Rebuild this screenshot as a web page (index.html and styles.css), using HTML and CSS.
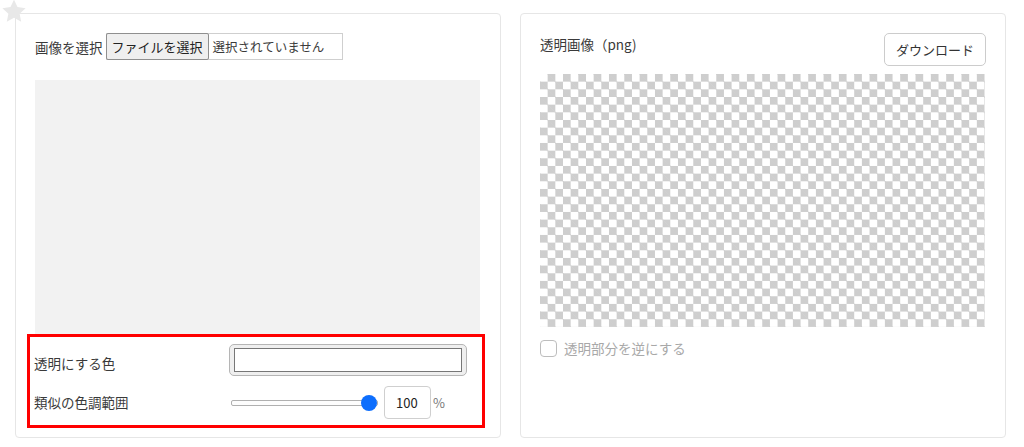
FILE: index.html
```html
<!DOCTYPE html>
<html lang="ja">
<head>
<meta charset="utf-8">
<link rel="stylesheet" href="styles.css">
</head>
<body>
<svg class="star" width="28" height="27" viewBox="0 0 24 24"><path d="M12 1.5l3.1 6.6 7.2.9-5.3 5 1.4 7.1L12 17.6l-6.4 3.5 1.4-7.1-5.3-5 7.2-.9z" fill="#e8e8e8"/></svg>
<main class="wrap">
  <section class="card left">
    <div class="file-row">
      <span class="lbl">画像を選択</span>
      <div class="file-box">
        <span class="file-btn">ファイルを選択</span>
        <span class="file-name">選択されていません</span>
      </div>
    </div>
    <div class="preview"></div>
    <div class="settings">
      <div class="set-row">
        <span class="set-lbl">透明にする色</span>
        <div class="color-input"><div class="swatch"></div></div>
      </div>
      <div class="set-row">
        <span class="set-lbl">類似の色調範囲</span>
        <div class="range">
          <div class="track"></div>
          <div class="thumb"></div>
        </div>
        <div class="num">100</div>
        <span class="pct">%</span>
      </div>
    </div>
  </section>
  <section class="card right">
    <div class="head">
      <span class="title">透明画像（png)</span>
      <button class="dl">ダウンロード</button>
    </div>
    <div class="checker"></div>
    <label class="check-row"><span class="box"></span><span class="check-lbl">透明部分を逆にする</span></label>
  </section>
</main>
</body>
</html>
```
FILE: styles.css
```css
* { box-sizing: border-box; }
html, body { margin: 0; background: #fff; }
body {
  font-family: "Noto Sans CJK JP", "Noto Sans", sans-serif;
  font-size: 13.5px;
  color: #3a3a3a;
  position: relative;
  width: 1024px;
  height: 447px;
  overflow: hidden;
}
.star { position: absolute; left: 0; top: -2px; }
.wrap {
  display: flex;
  gap: 19px;
  padding: 13px 0 0 15px;
}
.card {
  width: 486px;
  height: 425px;
  border: 1px solid #e6e6e6;
  border-radius: 4px;
  padding: 19px 19px 0 19px;
}
.file-row { display: flex; align-items: center; height: 27px; }
.lbl { margin-right: 3px; }
.file-box {
  display: flex; align-items: center;
  width: 237px; height: 27px;
  border: 1px solid #cfcfcf;
}
.file-btn {
  height: 27px; margin: -1px 0 0 -1px;
  padding: 0 5px;
  display: flex; align-items: center;
  background: #efefef;
  border: 1px solid #8f8f8f;
  border-radius: 2px;
  font-size: 13px;
  color: #222;
}
.file-name { margin-left: 4px; font-size: 12.5px; }
.preview {
  margin-top: 20px;
  width: 445px; height: 254px;
  background: #f2f2f2;
}
.settings {
  margin: 0 -4px 0 -8px;
  height: 94px;
  border: 3px solid #ff0000;
  padding: 7px 0 0 4px;
  display: flex; flex-direction: column;
}
.set-row { display: flex; align-items: center; }
.set-row:first-child { height: 36px; align-items: flex-start; }
.set-row:first-child .set-lbl { margin-top: 9px; }
.set-row:last-child { height: 38px; margin-top: 3px; }
.set-lbl { width: 195px; }
.color-input {
  width: 238px; height: 32px;
  background: #efefef;
  border: 1px solid #b5b5b5;
  border-radius: 5px;
  padding: 3px 4px;
}
.swatch { width: 100%; height: 100%; background: #fff; border: 1px solid #777; }
.range { position: relative; width: 147px; height: 20px; margin-left: 2px; }
.track {
  position: absolute; left: 0; right: 0; top: 8px; height: 6px;
  background: #fdfdfd; border: 1px solid #b0b0b0; border-radius: 2px;
}
.thumb {
  position: absolute; right: 1px; top: 3px;
  width: 16px; height: 16px; border-radius: 50%; background: #0d6efd;
}
.num {
  margin-left: 6px;
  width: 47px; height: 33px;
  border: 1px solid #cfcfcf; border-radius: 4px;
  display: flex; align-items: center; padding-left: 11px;
  font-size: 13px; color: #222;
}
.pct { margin-left: 2px; color: #777; font-size: 13px; }
.head { display: flex; justify-content: space-between; align-items: flex-start; height: 41px; }
.title { margin-top: 1px; }
.dl {
  width: 102px; height: 33px;
  background: #fff; border: 1px solid #cccccc; border-radius: 5px;
  font-family: inherit; font-size: 13px; color: #333; padding: 0;
}
.checker {
  width: 445px; height: 253px;
  background-color: #fff;
  background-image:
    linear-gradient(45deg, #cecece 25%, transparent 25%, transparent 75%, #cecece 75%),
    linear-gradient(45deg, #cecece 25%, transparent 25%, transparent 75%, #cecece 75%);
  background-size: 15.33px 15.33px;
  background-position: 0 0, 7.67px 7.67px;
}
.check-row { display: flex; align-items: center; margin-top: 11px; }
.box { width: 17px; height: 17px; border: 1px solid #bdbdbd; border-radius: 4px; margin-right: 7px; }
.check-lbl { color: #a8a8a8; }
```
